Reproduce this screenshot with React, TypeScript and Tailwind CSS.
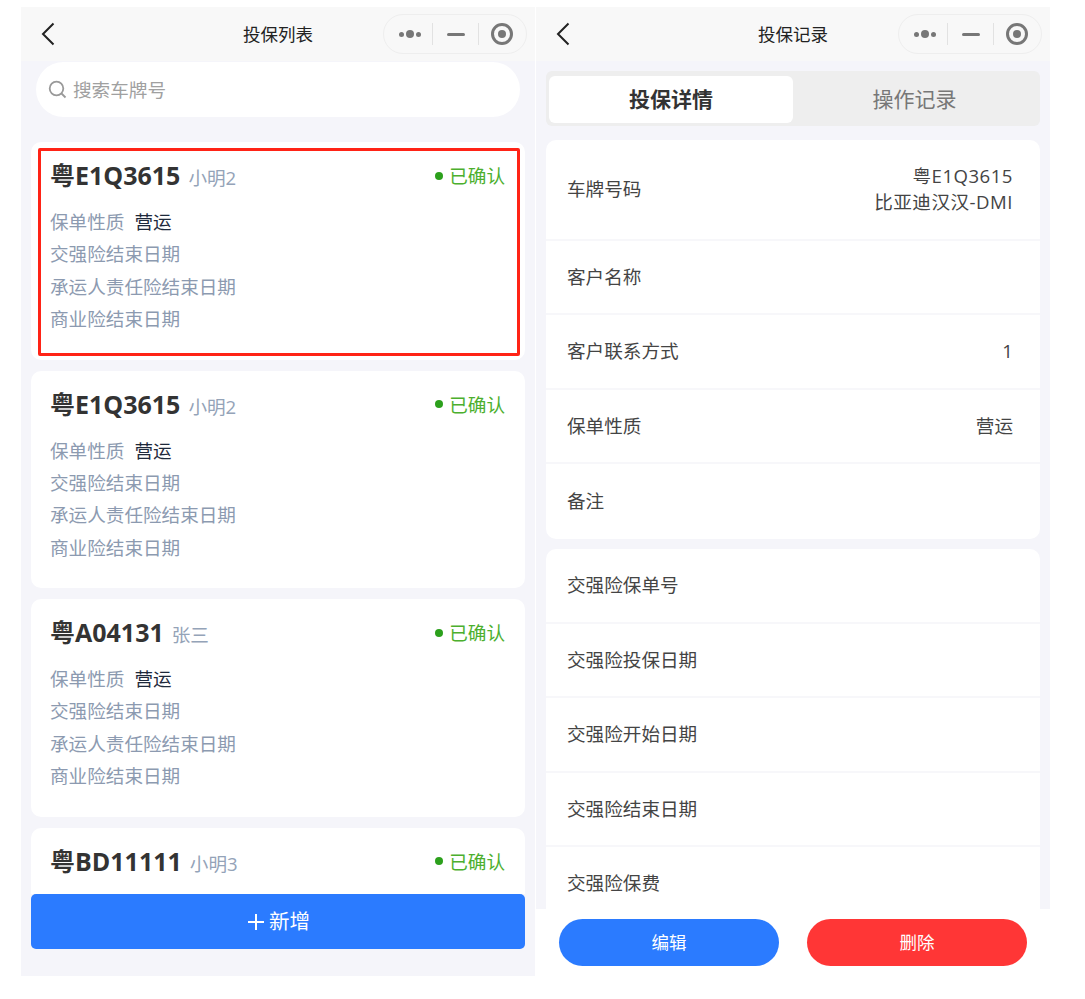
const font = "font-['Open_Sans','Noto_Sans_CJK_SC',sans-serif]";

function NavBar({ title }: { title: string }) {
  return (
    <div className="flex h-[54px] shrink-0 items-center justify-between bg-[#f8f8f8] pl-[20px] pr-[8px]">
      <svg width="14" height="24" viewBox="0 0 14 24" fill="none" stroke="#222" strokeWidth="2">
        <path d="M12.5 1.5 2 12l10.5 10.5" />
      </svg>
      <span className="absolute left-0 right-0 text-center text-[17.5px] text-[#222]">{title}</span>
      <div className="relative flex h-[40px] w-[144px] items-center rounded-full border border-[#eeeeee]">
        <div className="flex w-[48px] items-center justify-center gap-[2px] pl-[4px]">
          <span className="h-[5px] w-[5px] rounded-full bg-[#777]" />
          <span className="h-[8px] w-[8px] rounded-full bg-[#777]" />
          <span className="h-[5px] w-[5px] rounded-full bg-[#777]" />
        </div>
        <span className="h-[22px] w-px bg-[#e2e2e2]" />
        <div className="flex w-[45px] items-center justify-center">
          <span className="h-[3px] w-[18px] rounded-full bg-[#777]" />
        </div>
        <span className="h-[22px] w-px bg-[#e2e2e2]" />
        <div className="flex flex-1 items-center justify-center pr-[2px]">
          <span className="flex h-[22px] w-[22px] items-center justify-center rounded-full border-[3px] border-[#777]">
            <span className="h-[8px] w-[8px] rounded-full bg-[#777]" />
          </span>
        </div>
      </div>
    </div>
  );
}

function PolicyCard({
  plate,
  owner,
  highlighted,
  collapsed,
}: {
  plate: string;
  owner: string;
  highlighted?: boolean;
  collapsed?: boolean;
}) {
  return (
    <div className="relative h-[217.5px] shrink-0 rounded-[10px] bg-white pl-[19px] pr-[20px] pt-[16px]">
      {highlighted && (
        <div className="absolute left-[7px] right-[5px] top-[6px] h-[208px] rounded-[2px] border-[3px] border-[#ff2316]" />
      )}
      <div className="flex h-[36px] items-center justify-between">
        <div className="flex items-baseline gap-[8px]">
          <span className="text-[25px] font-bold text-[#333]">{plate}</span>
          <span className="text-[18.6px] text-[#94a3b8]">{owner}</span>
        </div>
        <div className="flex items-center gap-[6px] text-[18.6px] text-[#4caf2e]">
          <span className="h-[8px] w-[8px] rounded-full bg-[#2ca01c]" />
          已确认
        </div>
      </div>
      {!collapsed && (
        <div className="mt-[12px] text-[18.6px] leading-[32.4px] text-[#8c9ab0]">
          <div className="flex gap-[10px]">
            保单性质<span className="text-[#1e293b]">营运</span>
          </div>
          <div>交强险结束日期</div>
          <div>承运人责任险结束日期</div>
          <div>商业险结束日期</div>
        </div>
      )}
    </div>
  );
}

function DetailRow({ label, value, last }: { label: string; value?: string; last?: boolean }) {
  return (
    <div className={`flex h-[74.5px] items-center justify-between pl-[21px] pr-[27px] ${last ? "" : "border-b-2 border-[#f7f7fa]"}`}>
      <span>{label}</span>
      {value && <span>{value}</span>}
    </div>
  );
}

export default function App() {
  return (
    <div className={`${font} flex h-[999px] items-start bg-white pl-[21px] pt-[7px]`}>
      <div className="relative flex h-[969px] w-[514px] flex-col overflow-hidden bg-[#f5f5fa]">
        <NavBar title="投保列表" />
        <div className="ml-[15px] mt-[1px] flex h-[55px] w-[484px] shrink-0 items-center gap-[6px] rounded-full bg-white pl-[12px] text-[18.6px] text-[#a0a0a0]">
          <svg width="19" height="19" viewBox="0 0 19 19" fill="none" stroke="#999" strokeWidth="1.8">
            <circle cx="8.5" cy="8.5" r="6.8" />
            <path d="m13.5 13.5 4 4" />
          </svg>
          搜索车牌号
        </div>
        <div className="mx-[10px] mt-[25px] flex flex-col gap-[11px]">
          <PolicyCard plate="粤E1Q3615" owner="小明2" highlighted />
          <PolicyCard plate="粤E1Q3615" owner="小明2" />
          <PolicyCard plate="粤A04131" owner="张三" />
          <PolicyCard plate="粤BD11111" owner="小明3" collapsed />
        </div>
        <div className="absolute bottom-0 left-0 right-0 bg-[#f5f5fa] px-[10px] pb-[27px]">
          <div className="flex h-[55px] items-center justify-center gap-[5px] rounded-[5px] bg-[#2b7bff] pl-[2px] text-[20.5px] text-white">
            <svg width="16" height="16" viewBox="0 0 16 16" stroke="#fff" strokeWidth="2">
              <path d="M8 0v16M0 8h16" />
            </svg>
            新增
          </div>
        </div>
      </div>

      <div className="relative ml-px flex h-[992px] w-[514px] flex-col bg-white">
        <NavBar title="投保记录" />
        <div className="flex h-[848px] flex-col overflow-hidden bg-[#f5f5fa] px-[10px] pt-[10px]">
          <div className="flex h-[55px] shrink-0 items-center rounded-[6px] bg-[#eeeeee] px-[3px] pt-[1px] text-[21px]">
            <div className="flex h-[47px] w-[244px] items-center justify-center rounded-[6px] bg-white pt-[1px] font-bold text-[#333]">
              投保详情
            </div>
            <div className="flex-1 pr-[1px] pt-[1px] text-center text-[#777]">操作记录</div>
          </div>
          <div className="mt-[14px] shrink-0 rounded-[10px] bg-white text-[18.6px] text-[#444]">
            <div className="flex h-[100.6px] items-center justify-between border-b-2 border-[#f7f7fa] pl-[21px] pr-[27px]">
              <span>车牌号码</span>
              <span className="text-right leading-[26px] tracking-[0.5px]">
                粤E1Q3615
                <br />
                比亚迪汉汉-DMI
              </span>
            </div>
            <DetailRow label="客户名称" />
            <DetailRow label="客户联系方式" value="1" />
            <DetailRow label="保单性质" value="营运" />
            <DetailRow label="备注" last />
          </div>
          <div className="mt-[10.5px] shrink-0 rounded-[10px] bg-white text-[18.6px] text-[#444]">
            <DetailRow label="交强险保单号" />
            <DetailRow label="交强险投保日期" />
            <DetailRow label="交强险开始日期" />
            <DetailRow label="交强险结束日期" />
            <DetailRow label="交强险保费" />
          </div>
        </div>
        <div className="flex gap-[28px] pl-[23px] pt-[10px] text-[17.5px] text-white">
          <div className="flex h-[47px] w-[220px] items-center justify-center rounded-full bg-[#2b7bff]">编辑</div>
          <div className="flex h-[47px] w-[220px] items-center justify-center rounded-full bg-[#ff3636]">删除</div>
        </div>
      </div>
    </div>
  );
}
